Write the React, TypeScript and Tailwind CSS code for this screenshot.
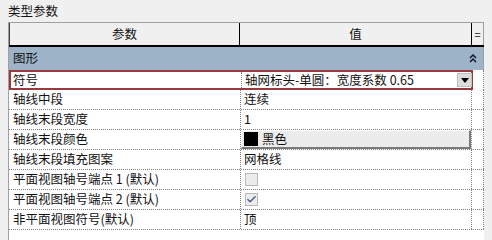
import { Check } from 'lucide-react'

const font = { fontFamily: '"Noto Sans CJK SC", "Noto Sans", sans-serif' }

type Row = {
  name: string
  value?: string
  kind?: 'text' | 'color' | 'check' | 'uncheck'
}

const rows: Row[] = [
  { name: '轴线中段', value: '连续' },
  { name: '轴线末段宽度', value: '1' },
  { name: '轴线末段颜色', value: '黑色', kind: 'color' },
  { name: '轴线末段填充图案', value: '网格线' },
  { name: '平面视图轴号端点 1 (默认)', kind: 'uncheck' },
  { name: '平面视图轴号端点 2 (默认)', kind: 'check' },
  { name: '非平面视图符号(默认)', value: '顶' },
]

function ValueCell({ row }: { row: Row }) {
  if (row.kind === 'color') {
    return (
      <div className="h-full flex items-center gap-[4px] pl-[2px] bg-[#ececec] border-r-2 border-b-2 border-[#7a7a7a] border-t border-l border-t-white border-l-white">
        <span className="w-[14px] h-[14px] bg-black" />
        <span>{row.value}</span>
      </div>
    )
  }
  if (row.kind === 'check' || row.kind === 'uncheck') {
    return (
      <div className="h-full flex items-center pl-[4px]">
        <span className="w-[13px] h-[13px] border border-[#b8b8b8] bg-[#ececec] flex items-center justify-center">
          {row.kind === 'check' && <Check className="w-[11px] h-[11px] text-[#4a5a8a]" strokeWidth={3} />}
        </span>
      </div>
    )
  }
  return <div className="h-full flex items-center pl-[3px]">{row.value}</div>
}

export default function App() {
  return (
    <div className="w-[492px] h-[240px] bg-[#f0f0f0] overflow-hidden text-[12.5px] text-[#111] leading-none" style={font}>
      <div className="h-[22px] pl-[8px] pt-[5px] text-[12.5px]">类型参数</div>
      <div className="ml-[8px] w-[476px] h-[218px] bg-white border-l border-t border-[#a0a0a0]">
        <div className="grid grid-cols-[231px_232px_12px] h-[24px] bg-[#f0f0f0] border-b-2 border-black">
          <div className="flex items-center justify-center border-r border-black border-l border-l-[#404040]">参数</div>
          <div className="flex items-center justify-center border-r border-black">值</div>
          <div className="flex items-center justify-center border-r border-[#a0a0a0] text-[11px]">=</div>
        </div>
        <div className="h-[23px] bg-[#9db3c7] flex items-center justify-between pl-[4px] pr-[6px] border-r border-[#a0a0a0]">
          <span>图形</span>
          <svg width="8" height="9" viewBox="0 0 8 9" fill="none" stroke="#101828" strokeWidth="1.5">
            <path d="M1 4 L4 1 L7 4" />
            <path d="M1 8 L4 5 L7 8" />
          </svg>
        </div>
        <div className="grid grid-cols-[464px_11px] h-[20px]">
          <div className="grid grid-cols-[230px_232px] border-2 border-[#9b3a3e]">
            <div className="flex items-center pl-[2px]">符号</div>
            <div className="flex items-center justify-between pl-[3px] border-l border-dotted border-[#808080]">
              <span>轴网标头-单圆：宽度系数 0.65</span>
              <span className="w-[15px] h-[14px] bg-[#dcdcdc] border border-[#c0c0c0] flex items-center justify-center mr-[1px]">
                <svg width="8" height="5" viewBox="0 0 8 5">
                  <path d="M0 0 H8 L4 5 Z" fill="#000" />
                </svg>
              </span>
            </div>
          </div>
          <div className="border-r border-dotted border-[#808080]" />
        </div>
        {rows.map((row) => (
          <div key={row.name} className="grid grid-cols-[232px_231px_12px] h-[20px] border-b border-dotted border-[#808080]">
            <div className="flex items-center pl-[4px] border-r border-dotted border-[#808080]">{row.name}</div>
            <div className="border-r border-dotted border-[#808080]">
              <ValueCell row={row} />
            </div>
            <div className="border-r border-dotted border-[#808080]" />
          </div>
        ))}
      </div>
    </div>
  )
}
